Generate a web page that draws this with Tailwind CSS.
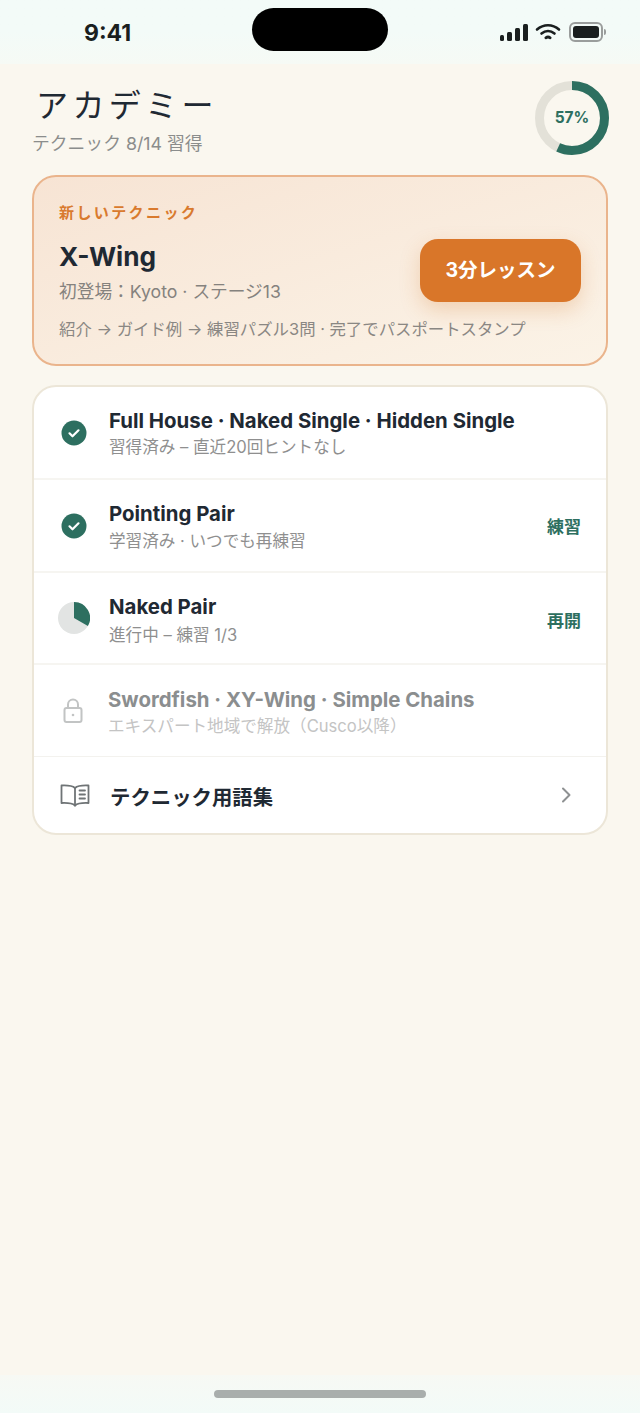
<!DOCTYPE html>
<html lang="ja"><head><meta charset="utf-8">
<script src="https://cdn.jsdelivr.net/npm/@tailwindcss/browser@4"></script>
</head>
<body class="m-0">
<div class="w-[640px] h-[1413px] flex flex-col bg-[#faf7ef] font-['Inter','Noto_Sans_CJK_JP',sans-serif] overflow-hidden">
  <div class="h-16 shrink-0 bg-gradient-to-b from-[#f3fbf8] via-[#f3fbf8] to-[#f6faf5] relative">
    <div class="absolute left-[84px] top-[19px] text-[23px] leading-7 font-bold text-[#1a1f1f] font-['Inter',sans-serif]">9:41</div>
    <div class="absolute left-[252px] top-2 w-[136px] h-[43px] rounded-full bg-black"></div>
    <div class="absolute left-[500px] top-[23px] flex items-end gap-[3px] h-[18px]">
      <div class="w-[4px] h-[6px] rounded-[1.5px] bg-[#1a1f1f]"></div>
      <div class="w-[5px] h-[9px] rounded-[1.5px] bg-[#1a1f1f]"></div>
      <div class="w-[5px] h-[13px] rounded-[1.5px] bg-[#1a1f1f]"></div>
      <div class="w-[5px] h-[17px] rounded-[1.5px] bg-[#1a1f1f]"></div>
    </div>
    <svg class="absolute left-[535px] top-[23px]" width="26" height="18" viewBox="0 0 26 18" fill="none" stroke="#1a1f1f" stroke-linecap="round"><path d="M2 6.500C8.500 0.800 17.500 0.800 24 6.500" stroke-width="2.600"/><path d="M6.500 10.500C10.500 7.200 15.500 7.200 19.500 10.500" stroke-width="2.600"/><path d="M10.800 14.800C12.200 13.800 13.800 13.800 15.200 14.800" stroke-width="2.800"/></svg>
    <div class="absolute left-[569px] top-[22px] w-[34px] h-[20px] rounded-[6px] border-2 border-[#9a9d9c] p-[2px]"><div class="w-full h-full rounded-[3px] bg-[#1a1f1f]"></div></div>
    <div class="absolute left-[604px] top-[29px] w-[2px] h-[6px] rounded-r-sm bg-[#9a9d9c]"></div>
  </div>

  <div class="flex-1 pl-8 pr-8 min-h-0">
    <div class="flex justify-between items-start h-[111px]">
      <div>
        <h1 class="mt-[17px] ml-[4px] text-[32px] leading-[44px] font-normal tracking-[4.400px] text-[#1f2933] font-['Noto_Sans_CJK_JP',serif]">アカデミー</h1>
        <p class="mt-[6px] text-[17.800px] leading-[26px] text-[#8b8d8c]">テクニック 8/14 習得</p>
      </div>
      <div class="relative w-[74px] h-[74px] mt-[17px] -mr-[1px] flex items-center justify-center">
        <svg class="absolute inset-0" width="74" height="74" viewBox="0 0 74 74" fill="none"><circle cx="37" cy="37" r="32.500" stroke="#e3e1d8" stroke-width="9"/><circle cx="37" cy="37" r="32.500" stroke="#2d6f60" stroke-width="9" pathLength="100" stroke-dasharray="57 100" transform="rotate(-90 37 37)"/></svg>
        <span class="relative text-[15.500px] font-bold text-[#2d6f60]">57%</span>
      </div>
    </div>

    <section class="h-[191px] rounded-[24px] border-2 border-[#eab48c] bg-gradient-to-br from-[#f7e4d4] to-[#fbf3e7] px-[25px] pt-[25px]">
      <div class="text-[15px] leading-[22px] font-bold tracking-[2.400px] text-[#d97a2e]">新しいテクニック</div>
      <div class="flex justify-between items-start">
        <div class="mt-[15px]">
          <div class="text-[26.200px] leading-[36px] font-bold text-[#1f2933]">X-Wing</div>
          <div class="text-[17.700px] leading-[26px] mt-[4px] text-[#85827e]">初登場：Kyoto · ステージ13</div>
        </div>
        <button class="mt-[15px] w-[161px] h-[63px] rounded-[18px] bg-[#d97629] text-white text-[19.500px] font-bold shadow-[0_8px_20px_rgba(217,118,41,0.25)]">3分レッスン</button>
      </div>
      <div class="mt-[12px] text-[16.400px] leading-[24px] text-[#8a8783] whitespace-nowrap">紹介 → ガイド例 → 練習パズル3問 · 完了でパスポートスタンプ</div>
    </section>

    <section class="mt-[19px] h-[450px] rounded-[24px] border-2 border-[#ece6d8] bg-white flex flex-col overflow-hidden">
      <div class="h-[93px] shrink-0 flex items-center pl-[27px] pr-[25px] border-b-2 border-[#f6f5f1]">
        <svg width="26" height="26" viewBox="0 0 26 26" class="shrink-0"><circle cx="13" cy="13" r="12.500" fill="#2d6f60"/><path d="M8.500 13.300l3 3 6-6" fill="none" stroke="#fff" stroke-width="2.200" stroke-linecap="round" stroke-linejoin="round"/></svg>
        <div class="ml-[22px] pt-[1px]">
          <div class="text-[20.400px] leading-[26px] font-bold text-[#1f2933]">Full House · Naked Single · Hidden Single</div>
          <div class="mt-[2px] text-[16.600px] leading-[22px] text-[#8f8f8f]">習得済み – 直近20回ヒントなし</div>
        </div>
      </div>
      <div class="h-[93px] shrink-0 flex items-center justify-between pl-[27px] pr-[25px] border-b-2 border-[#f6f5f1]">
        <div class="flex items-center">
          <svg width="26" height="26" viewBox="0 0 26 26" class="shrink-0"><circle cx="13" cy="13" r="12.500" fill="#2d6f60"/><path d="M8.500 13.300l3 3 6-6" fill="none" stroke="#fff" stroke-width="2.200" stroke-linecap="round" stroke-linejoin="round"/></svg>
          <div class="ml-[22px] pt-[2px]">
            <div class="text-[20.400px] leading-[26px] font-bold text-[#1f2933]">Pointing Pair</div>
            <div class="mt-[3px] text-[16.600px] leading-[22px] text-[#8f8f8f]">学習済み · いつでも再練習</div>
          </div>
        </div>
        <span class="mt-[5px] text-[17px] font-bold text-[#2d6f60]">練習</span>
      </div>
      <div class="h-[92px] shrink-0 flex items-center justify-between pl-[24px] pr-[25px] border-b-2 border-[#f6f5f1]">
        <div class="flex items-center">
          <svg width="32" height="32" viewBox="0 0 32 32" class="shrink-0"><circle cx="16" cy="16" r="16" fill="#e2e4e3"/><path d="M16 16V0A16 16 0 0 1 29.900 24Z" fill="#2d6f60"/></svg>
          <div class="ml-[19px] pt-[4px]">
            <div class="text-[20.400px] leading-[26px] font-bold text-[#1f2933]">Naked Pair</div>
            <div class="mt-[4px] text-[16.600px] leading-[22px] text-[#8f8f8f]">進行中 – 練習 1/3</div>
          </div>
        </div>
        <span class="mt-[7px] text-[17px] font-bold text-[#2d6f60]">再開</span>
      </div>
      <div class="h-[92px] shrink-0 flex items-center pl-[28px] pr-[25px] border-b border-[#f3f2ee]">
        <svg width="24" height="28" viewBox="0 0 24 28" fill="none" stroke="#c2c4c4" stroke-width="2" class="shrink-0 -ml-[1px]"><rect x="3.500" y="11" width="17" height="14" rx="2"/><path d="M7 11V7.500a5 5 0 0 1 10 0V11"/><circle cx="12" cy="18" r="1.300" fill="#c2c4c4" stroke="none"/></svg>
        <div class="ml-[23px] pt-[2px]">
          <div class="text-[20.400px] leading-[26px] font-bold text-[#8b8e8f]">Swordfish · XY-Wing · Simple Chains</div>
          <div class="mt-[2px] text-[16.600px] leading-[22px] text-[#c4c4c4]">エキスパート地域で解放（Cusco以降）</div>
        </div>
      </div>
      <div class="flex-1 flex items-center justify-between pl-[26px] pr-[34px]">
        <div class="flex items-center">
          <svg width="30" height="24" viewBox="0 0 30 24" fill="none" stroke="#6f7476" stroke-width="1.800" stroke-linejoin="round" stroke-linecap="round" class="shrink-0"><path d="M15 5C12.500 2.800 8 2.200 1.500 2.500V20C8 19.700 12.500 20.300 15 22.500C17.500 20.300 22 19.700 28.500 20V2.500C22 2.200 17.500 2.800 15 5Z"/><path d="M15 5V22.500"/><path d="M19.500 7.500H25M19.500 11.500H25M19.500 15.500H25"/></svg>
          <div class="ml-[20px] pt-[7px] text-[20.400px] font-bold text-[#1f2933]">テクニック用語集</div>
        </div>
        <svg width="12" height="18" viewBox="0 0 12 18" fill="none" stroke="#8e9192" stroke-width="2" stroke-linecap="round" stroke-linejoin="round"><path d="M3 2.500l6.500 6.500L3 15.500"/></svg>
      </div>
    </section>
  </div>

  <div class="h-[38px] shrink-0 bg-gradient-to-b from-[#f7f9f4] to-[#f3fbf8] flex justify-center pt-[15px]">
    <div class="w-[212px] h-[8px] rounded-full bg-[#a9aeac]"></div>
  </div>
</div>
</body></html>
